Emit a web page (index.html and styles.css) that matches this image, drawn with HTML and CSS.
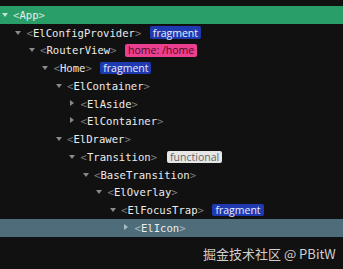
FILE: index.html
```html
<!DOCTYPE html>
<html>
<head>
<meta charset="utf-8">
<link rel="stylesheet" href="styles.css">
</head>
<body>
<div class="tree">
  <div class="row selected l0"><span class="arrow down"></span><span class="br">&lt;</span><span class="tag">App</span><span class="br">&gt;</span></div>
  <div class="row l1"><span class="arrow down"></span><span class="br">&lt;</span><span class="tag">ElConfigProvider</span><span class="br">&gt;</span><span class="badge frag">fragment</span></div>
  <div class="row l2"><span class="arrow down"></span><span class="br">&lt;</span><span class="tag">RouterView</span><span class="br">&gt;</span><span class="badge route">home: /home</span></div>
  <div class="row l3"><span class="arrow down"></span><span class="br">&lt;</span><span class="tag">Home</span><span class="br">&gt;</span><span class="badge frag">fragment</span></div>
  <div class="row l4"><span class="arrow down"></span><span class="br">&lt;</span><span class="tag">ElContainer</span><span class="br">&gt;</span></div>
  <div class="row l5"><span class="arrow right"></span><span class="br">&lt;</span><span class="tag">ElAside</span><span class="br">&gt;</span></div>
  <div class="row l5"><span class="arrow right"></span><span class="br">&lt;</span><span class="tag">ElContainer</span><span class="br">&gt;</span></div>
  <div class="row l4"><span class="arrow down"></span><span class="br">&lt;</span><span class="tag">ElDrawer</span><span class="br">&gt;</span></div>
  <div class="row l5"><span class="arrow down"></span><span class="br">&lt;</span><span class="tag">Transition</span><span class="br">&gt;</span><span class="badge func">functional</span></div>
  <div class="row l6"><span class="arrow down"></span><span class="br">&lt;</span><span class="tag">BaseTransition</span><span class="br">&gt;</span></div>
  <div class="row l7"><span class="arrow down"></span><span class="br">&lt;</span><span class="tag">ElOverlay</span><span class="br">&gt;</span></div>
  <div class="row l8"><span class="arrow down"></span><span class="br">&lt;</span><span class="tag">ElFocusTrap</span><span class="br">&gt;</span><span class="badge frag">fragment</span></div>
  <div class="row hover l9"><span class="arrow right"></span><span class="br">&lt;</span><span class="tag">ElIcon</span><span class="br">&gt;</span></div>
</div>
<div class="watermark">掘金技术社区 @ PBitW</div>
</body>
</html>
```

FILE: styles.css
```css
html, body {
  margin: 0;
  padding: 0;
  background: #111111;
  width: 343px;
  height: 269px;
  overflow: hidden;
}
body {
  position: relative;
}
.tree {
  padding-top: 6px;
  display: flex;
  flex-direction: column;
}
.row {
  height: 17.75px;
  display: flex;
  align-items: center;
  font-family: "DejaVu Sans Mono", "Liberation Mono", monospace;
  font-size: 10.6px;
  color: #ececec;
  white-space: nowrap;
}
.row.selected { background: #2a9e69; }
.row.selected .br { color: #c9e8d9; }
.row.hover { background: #4e6c79; }
.row.hover .br { color: #a9bcc4; }
.l0 { padding-left: 1.5px; }
.l1 { padding-left: 15px; }
.l2 { padding-left: 28.5px; }
.l3 { padding-left: 42px; }
.l4 { padding-left: 55.5px; }
.l5 { padding-left: 69px; }
.l6 { padding-left: 82.5px; }
.l7 { padding-left: 96px; }
.l8 { padding-left: 109.5px; }
.l9 { padding-left: 123px; }
.arrow {
  width: 11.5px;
  height: 8px;
  position: relative;
  flex: none;
}
.arrow::before {
  content: "";
  position: absolute;
  top: 2px;
  left: 0;
  width: 0;
  height: 0;
}
.arrow.down::before {
  border-left: 3.5px solid transparent;
  border-right: 3.5px solid transparent;
  border-top: 4.5px solid #8a8a8a;
}
.arrow.right::before {
  top: 0;
  left: 1px;
  border-top: 3.5px solid transparent;
  border-bottom: 3.5px solid transparent;
  border-left: 4.5px solid #8a8a8a;
}
.row.hover .arrow.right::before { border-left-color: #a8bcc5; }
.row.selected .arrow.down::before { border-top-color: #bfe3d1; }
.br { color: #7c7c7c; }
.tag { color: #ececec; }
.badge {
  margin-left: 8.5px;
  height: 12.5px;
  display: flex;
  align-items: center;
  padding: 0 3px;
  border-radius: 2px;
  font-family: "Open Sans", "Noto Sans", sans-serif;
  font-size: 10.5px;
}
.badge.frag { background: #1f3ab0; color: #e8ecff; }
.badge.route { background: #ec3f8f; color: #4b0c25; }
.badge.func { background: #e6e6e6; color: #666666; margin-left: 10px; }
.watermark {
  position: absolute;
  left: 203px;
  top: 244px;
  font-family: "Noto Sans CJK SC", "Noto Sans", sans-serif;
  font-size: 13px;
  color: #cfcfcf;
  white-space: nowrap;
}
```
